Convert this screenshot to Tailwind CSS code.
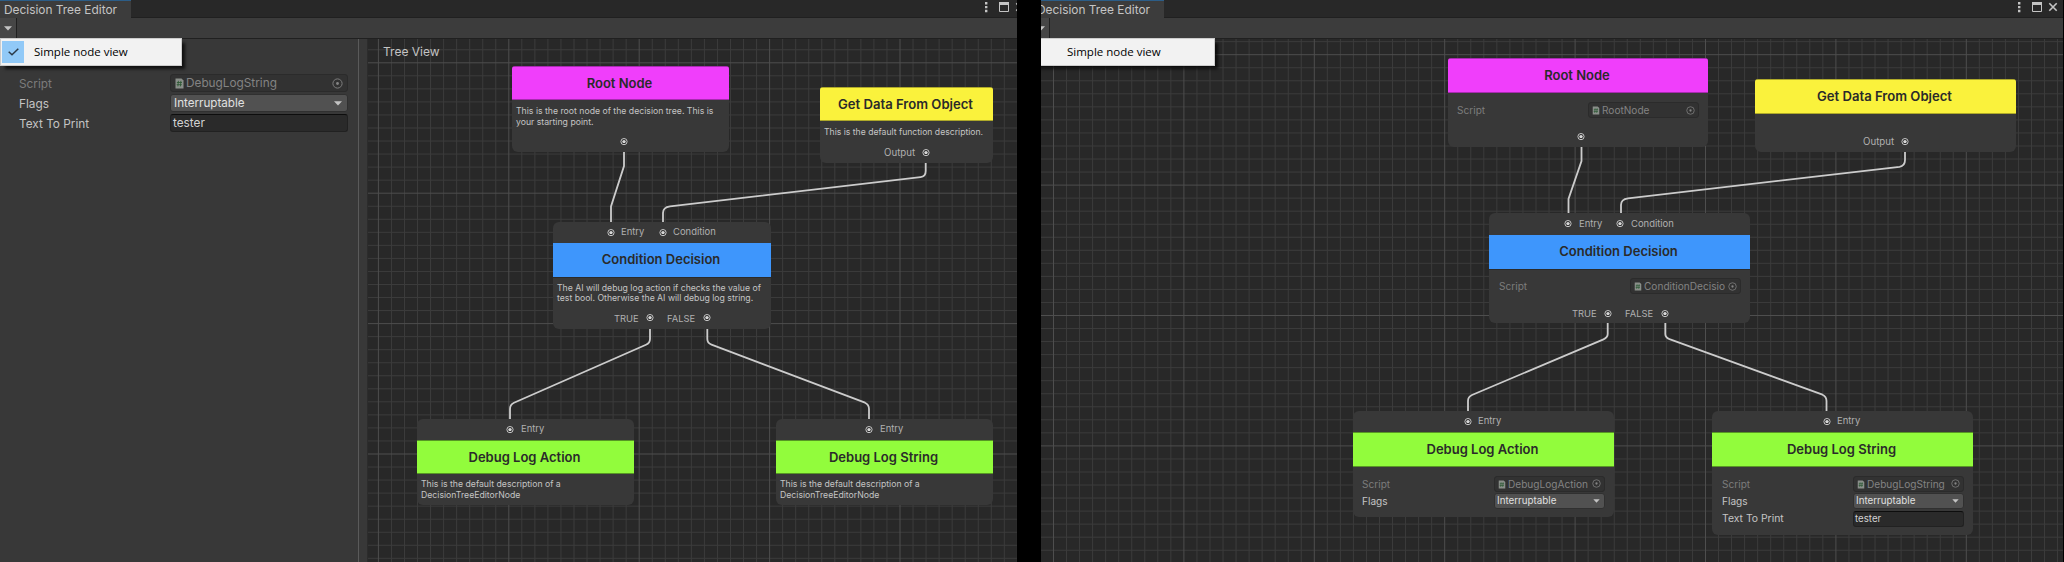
<!DOCTYPE html>
<html lang="en">
<head>
<meta charset="utf-8">
<title>Decision Tree Editor</title>
<script src="https://cdn.jsdelivr.net/npm/@tailwindcss/browser@4"></script>
</head>
<body class="bg-black overflow-hidden font-['Inter',sans-serif] text-[#c4c4c4]">
<svg class="hidden">
  <symbol id="port" viewBox="0 0 8 8"><circle cx="4" cy="3.600" r="3.100" fill="#262626" stroke="#c8c8c8" stroke-width="1"/><circle cx="4" cy="3.600" r="1.700" fill="#d8d8d8"/></symbol>
  <symbol id="script" viewBox="0 0 9 11"><path d="M.5.5H6.5L8.5 2.5V10.5H.5Z" fill="#8a8f8a"/><path d="M3.4 2.8 2.9 8.4M5.9 2.8 5.4 8.4M1.9 4.5H7M1.7 6.7H6.8" stroke="#2f5a36" stroke-width=".9" fill="none"/></symbol>
  <symbol id="target" viewBox="0 0 11 11"><circle cx="5.5" cy="5.5" r="4.6" fill="none" stroke="#7d7d7d" stroke-width="1"/><circle cx="5.5" cy="5.5" r="1.4" fill="#858585"/></symbol>
  <symbol id="arrow" viewBox="0 0 8 5"><path d="M0 .3H8L4 4.6Z" fill="#c4c4c4"/></symbol>
  <symbol id="winicons" viewBox="0 0 44 14"><path d="M1 2h2.4v2.4H1zM1 5.9h2.4v2.4H1zM1 9.8h2.4v2.4H1z" fill="#c4c4c4"/><path d="M15.5 2.5h9v9h-9z" fill="none" stroke="#c4c4c4"/><path d="M15 2h10v3H15z" fill="#c4c4c4"/><path d="M32.3 3.3l7.4 7.4M39.7 3.3l-7.4 7.4" stroke="#c4c4c4" stroke-width="1.6"/></symbol>
</svg>

<div class="flex h-[562px] w-[2064px] gap-6">

  <!-- Editor with simple node view enabled -->
  <section class="relative w-[1017px] shrink-0 overflow-hidden">
    <div class="flex h-full w-[1030px] flex-col bg-[#282828]">
      <header class="flex h-[18px] justify-between border-b border-[#202020]">
        <div class="z-10 -mb-px h-[18px] w-[131px] border-t border-[#2c5d87] bg-[#3c3c3c] pl-[4px] text-[11.9px] leading-[18px] whitespace-nowrap">Decision Tree Editor</div>
        <svg class="mr-[2px] h-[14px] w-[44px]"><use href="#winicons"/></svg>
      </header>
      <div class="flex h-[21px] border-b border-[#202020] bg-[#3c3c3c]">
        <div class="flex w-[17px] items-center justify-center border-r border-[#202020] bg-[#464646]"><svg class="h-[5px] w-[8px]"><use href="#arrow"/></svg></div>
      </div>
      <div class="flex h-[523px]">
        <aside class="flex w-[359px] flex-col gap-[2px] border-r border-[#5a5a5a] bg-[#383838] pt-[35px] pr-[10px] pl-[19px] text-[11.8px] leading-[18px]">
          <div class="flex h-[18px]">
            <div class="w-[151px] pt-px text-[#7c7c7c]">Script</div>
            <div class="flex flex-1 items-center rounded-[3px] border border-[#2b2b2b] bg-[#323232] pr-[4px] pl-[4px] text-[#838383]"><svg class="h-[11px] w-[9px]"><use href="#script"/></svg><span class="ml-[2px] flex-1">DebugLogString</span><svg class="h-[11px] w-[11px]"><use href="#target"/></svg></div>
          </div>
          <div class="flex h-[18px]">
            <div class="w-[151px] pt-px">Flags</div>
            <div class="flex flex-1 items-center justify-between rounded-[3px] border border-[#303030] bg-[#515151] pr-[5px] pl-[3px] text-[11.65px] text-[#e0e0e0]"><span>Interruptable</span><svg class="h-[5px] w-[8px]"><use href="#arrow"/></svg></div>
          </div>
          <div class="flex h-[18px]">
            <div class="w-[151px] pt-px">Text To Print</div>
            <div class="flex flex-1 items-center rounded-[3px] border border-[#212121] border-t-[#0d0d0d] bg-[#2a2a2a] pl-[2px] text-[#d2d2d2]">tester</div>
          </div>
        </aside>
        <div class="w-[9px] border-r border-[#2c2c2c] bg-[#383838]"></div>
        <main class="relative flex-1 overflow-hidden">
          <svg class="absolute inset-0 h-[523px] w-[662px]" viewBox="368 39 662 523" fill="none">
            <g data-grid="378.4 62.8"></g>
            <g stroke="#cccccc" stroke-width="1.800">
              <path d="M624 152V166L611 206.500V222"/>
              <path d="M925.700 163V171Q925.700 176.500 920.500 177.200L670 206.300Q663 207.200 663 213V222"/>
              <path d="M650 328V339Q650 343 646 344.800L514 402.700Q510 404.500 510 409V419"/>
              <path d="M707.300 328V339Q707.300 343 711.500 344.600L865 402.700Q869 404.500 869 409V419"/>
            </g>
          </svg>
          <div class="absolute top-[6px] left-[15px] text-[12px] leading-[14px]">Tree View</div>

          <article class="absolute top-[27px] left-[144px] h-[86px] w-[217px] overflow-hidden rounded-t-[3px] rounded-b-[6px] bg-[#383838]">
            <h2 class="h-[34px] border-y border-black/30 bg-[#f03efb] pr-[2px] text-center text-[13px] leading-[33px] font-semibold text-[#2a2a2a]">Root Node</h2>
            <p class="pt-[6px] pl-[4px] text-[8.7px] leading-[10.600px] whitespace-nowrap">This is the root node of the decision tree. This is<br>your starting point.</p>
            <div class="flex pt-[11px] pl-[108px]"><svg class="h-[8px] w-[8px]"><use href="#port"/></svg></div>
          </article>

          <article class="absolute top-[48px] left-[452px] h-[76px] w-[173px] overflow-hidden rounded-t-[3px] rounded-b-[6px] bg-[#383838]">
            <h2 class="h-[34px] border-y border-black/30 bg-[#faf23c] pr-[2px] text-center text-[13.1px] leading-[33px] font-semibold text-[#2a2a2a]">Get Data From Object</h2>
            <p class="pt-[6px] pl-[4px] text-[8.65px] leading-[10.600px] whitespace-nowrap">This is the default function description.</p>
            <div class="flex items-center pt-[8px] pl-[64px] text-[9.7px] leading-[14px] text-[#b0b0b0]"><span class="w-[38px]">Output</span><svg class="h-[8px] w-[8px]"><use href="#port"/></svg></div>
          </article>

          <article class="absolute top-[183px] left-[185px] h-[107px] w-[218px] overflow-hidden rounded-[6px] bg-[#383838]">
            <div class="flex h-[21px] items-center pl-[54px] text-[9.45px] text-[#b0b0b0]"><svg class="h-[8px] w-[8px]"><use href="#port"/></svg><span class="ml-[6px] w-[38px]">Entry</span><svg class="h-[8px] w-[8px]"><use href="#port"/></svg><span class="ml-[6px]">Condition</span></div>
            <h2 class="h-[34px] bg-[#3e96fc] pr-[2px] text-center text-[13px] leading-[33px] font-semibold text-[#2a2a2a]">Condition Decision</h2>
            <p class="border-t border-[#2a2a2a] pt-[5px] pl-[4px] text-[8.68px] leading-[10.300px] whitespace-nowrap">The AI will debug log action if checks the value of<br>test bool. Otherwise the AI will debug log string.</p>
            <div class="flex items-center pt-[7px] pl-[61px] text-[9.4px] leading-[15px] text-[#b0b0b0]"><span class="w-[32px]">TRUE</span><svg class="h-[8px] w-[8px]"><use href="#port"/></svg><span class="ml-[13px] w-[36px]">FALSE</span><svg class="h-[8px] w-[8px]"><use href="#port"/></svg></div>
          </article>

          <article class="absolute top-[380px] left-[49px] h-[86px] w-[217px] overflow-hidden rounded-[6px] bg-[#383838]">
            <div class="flex h-[21px] items-center pl-[89px] text-[9.45px] text-[#b0b0b0]"><svg class="h-[8px] w-[8px]"><use href="#port"/></svg><span class="ml-[7px]">Entry</span></div>
            <h2 class="h-[34px] border-y border-black/40 bg-[#92fc3c] pr-[2px] text-center text-[13px] leading-[33px] font-semibold text-[#2a2a2a]">Debug Log Action</h2>
            <p class="pt-[5px] pl-[4px] text-[8.7px] leading-[10.600px] whitespace-nowrap">This is the default description of a<br>DecisionTreeEditorNode</p>
          </article>

          <article class="absolute top-[380px] left-[408px] h-[86px] w-[217px] overflow-hidden rounded-[6px] bg-[#383838]">
            <div class="flex h-[21px] items-center pl-[89px] text-[9.45px] text-[#b0b0b0]"><svg class="h-[8px] w-[8px]"><use href="#port"/></svg><span class="ml-[7px]">Entry</span></div>
            <h2 class="h-[34px] border-y border-black/40 bg-[#92fc3c] pr-[2px] text-center text-[13px] leading-[33px] font-semibold text-[#2a2a2a]">Debug Log String</h2>
            <p class="pt-[5px] pl-[4px] text-[8.7px] leading-[10.600px] whitespace-nowrap">This is the default description of a<br>DecisionTreeEditorNode</p>
          </article>
        </main>
      </div>
    </div>
    <div class="absolute top-[38px] left-0 flex h-[28px] w-[182px] items-center border border-[#cccccc] bg-[#f2f2f2] pl-[1px] shadow-[4px_4px_3px_-1px_rgba(0,0,0,0.7)]">
      <div class="flex h-[22px] w-[22px] items-center justify-center bg-[#91c9f7]"><svg class="h-[8px] w-[11px]" viewBox="0 0 11 8" fill="none" stroke="#2b3a48" stroke-width="1.500"><path d="M.7 3.700 4 6.800 10.300.7"/></svg></div>
      <span class="ml-[10px] font-['Open_Sans',sans-serif] text-[11.5px] text-black">Simple node view</span>
    </div>
  </section>

  <!-- Editor with full property fields in the nodes -->
  <section class="relative w-[1023px] shrink-0 overflow-hidden">
    <div class="-ml-[8px] flex h-full w-[1030px] flex-col bg-[#282828]">
      <header class="flex h-[18px] justify-between border-b border-[#202020]">
        <div class="z-10 -mb-px h-[18px] w-[131px] border-t border-[#2c5d87] bg-[#3c3c3c] pl-[4px] text-[11.9px] leading-[18px] whitespace-nowrap">Decision Tree Editor</div>
        <svg class="mr-[2px] h-[14px] w-[44px]"><use href="#winicons"/></svg>
      </header>
      <div class="flex h-[21px] border-b border-[#202020] bg-[#3c3c3c]">
        <div class="flex w-[17px] items-center justify-center border-r border-[#202020] bg-[#464646]"><svg class="h-[5px] w-[8px]"><use href="#arrow"/></svg></div>
      </div>
      <main class="relative h-[523px] overflow-hidden">
        <svg class="absolute inset-0 h-[523px] w-[1030px]" viewBox="1033 39 1030 523" fill="none">
          <g data-grid="1053.5 54.7"></g>
          <g stroke="#cccccc" stroke-width="1.800">
            <path d="M1581.500 146V161L1568.500 199V213"/>
            <path d="M1905 152V160Q1905 166 1899.500 166.800L1628 198.300Q1621 199.200 1621 205V213"/>
            <path d="M1607.700 322V334Q1607.700 337.500 1603.500 339.300L1472 395Q1468 396.800 1468 401V411"/>
            <path d="M1665.300 322V334Q1665.300 337.500 1669.500 339.200L1822.500 394.700Q1826.500 396.500 1826.500 401V411"/>
          </g>
        </svg>

        <article class="absolute top-[19px] left-[415px] h-[89px] w-[260px] overflow-hidden rounded-t-[3px] rounded-b-[6px] bg-[#383838]">
          <h2 class="h-[35px] border-y border-black/30 bg-[#f03efb] pr-[2px] text-center text-[13px] leading-[33px] font-semibold text-[#2a2a2a]">Root Node</h2>
          <div class="mt-[9px] flex h-[16px] items-center pr-[9px] pl-[9px] text-[10.1px] leading-[16px]">
            <span class="w-[131px] text-[#7c7c7c]">Script</span>
            <div class="flex h-[16px] flex-1 items-center rounded-[3px] border border-[#2b2b2b] bg-[#323232] pr-[3px] pl-[3px] text-[#838383]"><svg class="h-[9px] w-[8px] shrink-0"><use href="#script"/></svg><span class="ml-[2px] w-[82px] overflow-hidden">RootNode</span><svg class="ml-auto h-[9px] w-[9px] shrink-0"><use href="#target"/></svg></div>
          </div>
          <div class="flex pt-[15px] pl-[129px]"><svg class="h-[8px] w-[8px]"><use href="#port"/></svg></div>
        </article>

        <article class="absolute top-[40px] left-[722px] h-[73px] w-[261px] overflow-hidden rounded-t-[3px] rounded-b-[6px] bg-[#383838]">
          <h2 class="h-[35px] border-y border-black/30 bg-[#faf23c] pr-[2px] text-center text-[13.1px] leading-[33px] font-semibold text-[#2a2a2a]">Get Data From Object</h2>
          <div class="flex items-center pt-[21px] pl-[108px] text-[9.7px] leading-[14px] text-[#b0b0b0]"><span class="w-[38px]">Output</span><svg class="h-[8px] w-[8px]"><use href="#port"/></svg></div>
        </article>

        <article class="absolute top-[174px] left-[456px] h-[110px] w-[261px] overflow-hidden rounded-[6px] bg-[#383838]">
          <div class="flex h-[22px] items-center pl-[75px] text-[9.45px] text-[#b0b0b0]"><svg class="h-[8px] w-[8px]"><use href="#port"/></svg><span class="ml-[7px] w-[37px]">Entry</span><svg class="h-[8px] w-[8px]"><use href="#port"/></svg><span class="ml-[7px]">Condition</span></div>
          <h2 class="h-[34px] bg-[#3e96fc] pr-[2px] text-center text-[13px] leading-[33px] font-semibold text-[#2a2a2a]">Condition Decision</h2>
          <div class="flex h-[25px] items-end border-t border-[#2a2a2a] pr-[9px] pl-[10px] text-[10.1px] leading-[16px]">
            <span class="w-[131px] text-[#7c7c7c]">Script</span>
            <div class="flex h-[16px] flex-1 items-center rounded-[3px] border border-[#2b2b2b] bg-[#323232] pr-[3px] pl-[3px] text-[#838383]"><svg class="h-[9px] w-[8px] shrink-0"><use href="#script"/></svg><span class="ml-[2px] w-[81px] overflow-hidden">ConditionDecision</span><svg class="ml-auto h-[9px] w-[9px] shrink-0"><use href="#target"/></svg></div>
          </div>
          <div class="flex items-center pt-[12px] pl-[83px] text-[9.4px] leading-[15px] text-[#b0b0b0]"><span class="w-[32px]">TRUE</span><svg class="h-[8px] w-[8px]"><use href="#port"/></svg><span class="ml-[13px] w-[36px]">FALSE</span><svg class="h-[8px] w-[8px]"><use href="#port"/></svg></div>
        </article>

        <article class="absolute top-[372px] left-[320px] h-[106px] w-[261px] overflow-hidden rounded-[6px] bg-[#383838]">
          <div class="flex h-[21px] items-center pl-[111px] text-[9.45px] text-[#b0b0b0]"><svg class="h-[8px] w-[8px]"><use href="#port"/></svg><span class="ml-[6px]">Entry</span></div>
          <h2 class="h-[35px] border-y border-black/40 bg-[#92fc3c] pr-[2px] text-center text-[13px] leading-[33px] font-semibold text-[#2a2a2a]">Debug Log Action</h2>
          <div class="flex flex-col gap-[1px] pt-[9px] pr-[9px] pl-[9px] text-[10.1px] leading-[16px]">
            <div class="flex h-[16px]">
              <span class="w-[132px] text-[#7c7c7c]">Script</span>
              <div class="flex flex-1 items-center rounded-[3px] border border-[#2b2b2b] bg-[#323232] pr-[3px] pl-[3px] text-[#838383]"><svg class="h-[9px] w-[8px] shrink-0"><use href="#script"/></svg><span class="ml-[2px] w-[82px] overflow-hidden">DebugLogAction</span><svg class="mb-[2px] ml-auto h-[9px] w-[9px] shrink-0"><use href="#target"/></svg></div>
            </div>
            <div class="flex h-[16px]">
              <span class="w-[132px]">Flags</span>
              <div class="flex flex-1 items-center justify-between rounded-[3px] border border-[#303030] bg-[#515151] pr-[4px] pl-[2px] text-[9.8px] leading-[14px] text-[#e0e0e0]"><span>Interruptable</span><svg class="h-[4px] w-[7px]"><use href="#arrow"/></svg></div>
            </div>
          </div>
        </article>

        <article class="absolute top-[372px] left-[679px] h-[124px] w-[261px] overflow-hidden rounded-[6px] bg-[#383838]">
          <div class="flex h-[21px] items-center pl-[111px] text-[9.45px] text-[#b0b0b0]"><svg class="h-[8px] w-[8px]"><use href="#port"/></svg><span class="ml-[6px]">Entry</span></div>
          <h2 class="h-[35px] border-y border-black/40 bg-[#92fc3c] pr-[2px] text-center text-[13px] leading-[33px] font-semibold text-[#2a2a2a]">Debug Log String</h2>
          <div class="flex flex-col gap-[1px] pt-[9px] pr-[9px] pl-[10px] text-[10.1px] leading-[16px]">
            <div class="flex h-[16px]">
              <span class="w-[131px] text-[#7c7c7c]">Script</span>
              <div class="flex flex-1 items-center rounded-[3px] border border-[#2b2b2b] bg-[#323232] pr-[3px] pl-[3px] text-[#838383]"><svg class="h-[9px] w-[8px] shrink-0"><use href="#script"/></svg><span class="ml-[2px] w-[82px] overflow-hidden">DebugLogString</span><svg class="mb-[2px] ml-auto h-[9px] w-[9px] shrink-0"><use href="#target"/></svg></div>
            </div>
            <div class="flex h-[16px]">
              <span class="w-[131px]">Flags</span>
              <div class="flex flex-1 items-center justify-between rounded-[3px] border border-[#303030] bg-[#515151] pr-[4px] pl-[2px] text-[9.8px] leading-[14px] text-[#e0e0e0]"><span>Interruptable</span><svg class="h-[4px] w-[7px]"><use href="#arrow"/></svg></div>
            </div>
            <div class="flex h-[17px] items-end">
              <span class="w-[131px] text-[10.4px]">Text To Print</span>
              <div class="flex h-[16px] flex-1 items-center rounded-[3px] border border-[#212121] border-t-[#0d0d0d] bg-[#2a2a2a] pl-[1px] text-[9.7px] leading-[14px] text-[#d2d2d2]">tester</div>
            </div>
          </div>
        </article>
      </main>
    </div>
    <div class="absolute top-[38px] -left-[8px] flex h-[28px] w-[182px] items-center border border-[#cccccc] bg-[#f2f2f2] pl-[33px] shadow-[4px_4px_3px_-1px_rgba(0,0,0,0.7)]">
      <span class="font-['Open_Sans',sans-serif] text-[11.5px] text-black">Simple node view</span>
    </div>
  </section>
</div>

<script>
// Canvas grid: a thin line every 13.04px, a brighter one every tenth.
const step = 13.04;
document.querySelectorAll('[data-grid]').forEach(g => {
  const [gx, gy] = g.dataset.grid.split(' ').map(Number);
  const box = g.ownerSVGElement.viewBox.baseVal;
  let thin = '', thick = '';
  for (let i = -10; i < 90; i++) {
    const x = gx + i * step, y = gy + i * step;
    let d = '';
    if (x > box.x && x < box.x + box.width) d += `M${x.toFixed(2)} ${box.y}v${box.height}`;
    if (y > box.y && y < box.y + box.height) d += `M${box.x} ${y.toFixed(2)}h${box.width}`;
    if (i % 10 === 0) thick += d; else thin += d;
  }
  g.innerHTML = `<path d="${thin}" stroke="#3c3c3c"/><path d="${thick}" stroke="#4e4e4e"/>`;
});
</script>
</body>
</html>
